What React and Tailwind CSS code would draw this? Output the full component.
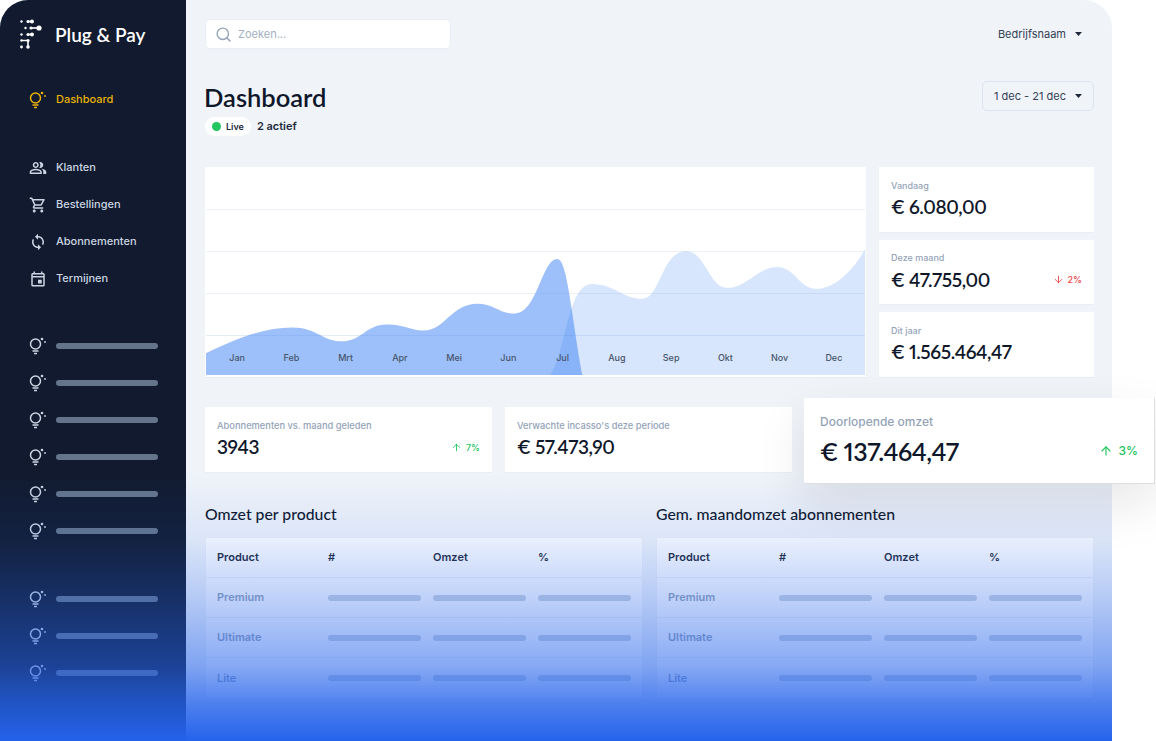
import React from 'react';
import { ArrowUp, ArrowDown, Search } from 'lucide-react';
import { MdOutlinePeopleAlt, MdOutlineShoppingCart, MdSync, MdOutlineEvent } from 'react-icons/md';

const months = ['Jan', 'Feb', 'Mrt', 'Apr', 'Mei', 'Jun', 'Jul', 'Aug', 'Sep', 'Okt', 'Nov', 'Dec'];

const navItems = [
  { name: 'Klanten', icon: MdOutlinePeopleAlt },
  { name: 'Bestellingen', icon: MdOutlineShoppingCart },
  { name: 'Abonnementen', icon: MdSync },
  { name: 'Termijnen', icon: MdOutlineEvent },
];

const Logo = () => (
  <svg width="24" height="32" viewBox="0 0 24 32" fill="white" className="shrink-0">
    <circle cx="1.5" cy="2.5" r="1.2" />
    <circle cx="8" cy="2.5" r="1.6" />
    <circle cx="12" cy="2.5" r="2" />
    <rect x="8" y="1.7" width="5" height="1.6" />
    <circle cx="5.5" cy="9" r="1.2" />
    <circle cx="11" cy="9" r="1.6" />
    <circle cx="19" cy="9" r="2.6" />
    <rect x="11" y="8.2" width="8" height="1.6" />
    <circle cx="1.5" cy="15.5" r="1.2" />
    <circle cx="8" cy="15.5" r="1.6" />
    <circle cx="12" cy="15.5" r="2" />
    <rect x="8" y="14.7" width="4" height="1.6" />
    <circle cx="1.5" cy="21.5" r="1.2" />
    <circle cx="8" cy="21.5" r="1.6" />
    <rect x="1.5" y="20.8" width="6.5" height="1.4" />
    <rect x="7.2" y="21.5" width="1.6" height="6" />
    <circle cx="1.5" cy="28" r="1.4" />
    <circle cx="8" cy="28" r="1.8" />
  </svg>
);

const Bulb = ({ className }) => (
  <svg width="18" height="18" viewBox="0 0 18 18" fill="none" className={className}>
    <circle cx="6.5" cy="7" r="5" stroke="currentColor" strokeWidth="1.5" />
    <path d="M3.5 14h6M5 16.4h3" stroke="currentColor" strokeWidth="1.5" />
    <circle cx="13" cy="2" r="1.3" fill="currentColor" />
    <circle cx="16" cy="5" r="0.9" fill="currentColor" />
  </svg>
);

const Caret = () => (
  <svg width="7" height="4" viewBox="0 0 7 4" className="text-[#1e293b]">
    <path d="M0 0h7L3.5 4z" fill="currentColor" />
  </svg>
);

const NavRow = ({ children }) => (
  <div className="flex h-[37px] items-center pl-[29px]">{children}</div>
);

const PlaceholderGroup = ({ count, className }) => (
  <div className={className}>
    {Array.from({ length: count }).map((_, i) => (
      <NavRow key={i}>
        <Bulb className="mr-[9px] text-[#cbd5e1]" />
        <div className="h-[6px] w-[102px] rounded-full bg-[#64748b]" />
      </NavRow>
    ))}
  </div>
);

const Sidebar = () => (
  <aside className="w-[186px] shrink-0 rounded-tl-[28px] bg-[#111a2e]">
    <div className="mt-[20px] flex h-[30px] items-center pl-[20px]">
      <Logo />
      <span className="ml-[11px] font-['Lato'] text-[19px] font-semibold text-white">Plug &amp; Pay</span>
    </div>
    <div className="mt-[31px]">
      <NavRow>
        <Bulb className="mr-[9px] text-[#eab308]" />
        <span className="text-[11px] font-medium text-[#eab308]">Dashboard</span>
      </NavRow>
    </div>
    <div className="mt-[31px]">
      {navItems.map((item) => {
        const Icon = item.icon;
        return (
          <NavRow key={item.name}>
            <Icon className="mr-[9px] h-[18px] w-[18px] text-[#cbd5e1]" />
            <span className="text-[11px] font-medium text-[#cbd5e1]">{item.name}</span>
          </NavRow>
        );
      })}
    </div>
    <PlaceholderGroup count={6} className="mt-[30px]" />
    <PlaceholderGroup count={3} className="mt-[31px]" />
  </aside>
);

const Stat = ({ label, value, change, down }) => (
  <div className="flex flex-1 flex-col justify-center border border-white bg-white pl-[11px] pr-[11px] shadow-[0_1px_0_#e9eef5]">
    <div className="text-[9px] font-medium text-[#94a3b8]">{label}</div>
    <div className="mt-[2px] flex items-center justify-between">
      <span className="font-['Lato'] text-[19px] font-semibold leading-[26px] tracking-[-0.4px] text-[#0f172a] proportional-nums">{value}</span>
      {change && (
        <span className={`flex items-center gap-[4px] text-[9px] font-medium ${down ? 'text-[#ef4444]' : 'text-[#22c55e]'}`}>
          {down ? <ArrowDown className="h-[11px] w-[11px]" /> : <ArrowUp className="h-[11px] w-[11px]" />}
          {change}
        </span>
      )}
    </div>
  </div>
);

const Chart = () => (
  <div className="relative h-[210px] flex-1 border border-white bg-white shadow-[0_1px_0_#e9eef5]">
    <div className="h-[42px] border-b border-[#eef2f8]" />
    <div className="h-[42px] border-b border-[#eef2f8]" />
    <div className="h-[42px] border-b border-[#eef2f8]" />
    <div className="h-[42px] border-b border-[#e6ecf6]" />
    <svg viewBox="0 0 660 210" preserveAspectRatio="none" className="absolute inset-0 h-full w-full">
      <path
        d="M0 187C32 171 60 161 86 161C112 161 116 175 136 175C156 175 160 158 181 158C200 158 204 164 218 164C240 164 245 137 272 137C288 137 294 147 309 147C332 147 336 92 352 92C362 92 366 150 377 209H0Z"
        fill="#3b82f6"
        fillOpacity="0.5"
      />
      <path
        d="M345 209C362 180 362 117 387 117C408 117 418 132 437 132C455 132 456 84 481 84C500 84 504 121 522 121C542 121 552 100 572 100C590 100 594 122 611 122C632 122 650 100 660 82V209Z"
        fill="#3b82f6"
        fillOpacity="0.2"
      />
    </svg>
    <div className="absolute inset-x-[4px] bottom-[12px] grid grid-cols-12 text-center text-[9px] font-medium text-[#475569]">
      {months.map((m) => (
        <span key={m}>{m}</span>
      ))}
    </div>
  </div>
);

const SmallCard = ({ label, value, change }) => (
  <div className="mt-[9px] flex h-[65px] w-[287px] shrink-0 flex-col justify-center border border-white bg-white px-[11px] shadow-[0_1px_0_#e9eef5]">
    <div className="text-[9.3px] font-medium text-[#94a3b8]">{label}</div>
    <div className="mt-[2px] flex items-center justify-between">
      <span className="font-['Lato'] text-[19px] font-semibold leading-[26px] tracking-[-0.4px] text-[#0f172a] proportional-nums">{value}</span>
      {change && (
        <span className="flex items-center gap-[4px] text-[9px] font-medium text-[#22c55e]">
          <ArrowUp className="h-[11px] w-[11px]" />
          {change}
        </span>
      )}
    </div>
  </div>
);

const DataTable = ({ title }) => (
  <div className="w-[438px]">
    <h2 className="font-['Lato'] text-[15.8px] font-medium leading-[24px] text-[#0f172a]">{title}</h2>
    <div className="mt-[11px] border border-[#eef2f8] bg-white">
      <div className="grid h-[40px] grid-cols-[99px_93px_93px_93px] items-center gap-x-[12px] border-b border-[#eef2f8] px-[11px] text-[11px] font-semibold text-[#1e293b]">
        <span>Product</span>
        <span>#</span>
        <span>Omzet</span>
        <span>%</span>
      </div>
      {['Premium', 'Ultimate', 'Lite'].map((name, i) => (
        <div
          key={name}
          className={`grid h-[40px] grid-cols-[99px_93px_93px_93px] items-center gap-x-[12px] px-[11px] ${i < 2 ? 'border-b border-[#eef2f8]' : ''}`}
        >
          <span className="text-[11px] font-semibold text-[#94a3b8]">{name}</span>
          <div className="h-[6px] rounded-full bg-[#cbd5e1]" />
          <div className="h-[6px] rounded-full bg-[#cbd5e1]" />
          <div className="h-[6px] rounded-full bg-[#cbd5e1]" />
        </div>
      ))}
    </div>
  </div>
);

export default function App() {
  return (
    <div className="h-[741px] w-[1156px] overflow-hidden bg-white font-['Inter',sans-serif]">
      <div className="relative flex h-full w-[1112px] rounded-t-[28px] bg-[#f0f4f9]">
        <Sidebar />
        <main className="flex-1 px-[19px] pt-[19px]">
          <div className="flex h-[30px] items-center justify-between">
            <div className="flex h-[30px] w-[246px] items-center rounded-[5px] border border-[#e9eef5] bg-white px-[10px]">
              <Search className="-ml-[1px] h-[17px] w-[17px] text-[#94a3b8]" />
              <span className="ml-[6px] text-[11px] text-[#a3b0c2]">Zoeken...</span>
            </div>
            <div className="mr-[12px] flex items-center gap-[9px] text-[11px] text-[#334155]">
              Bedrijfsnaam
              <Caret />
            </div>
          </div>

          <div className="mt-[31px] flex items-start justify-between">
            <div>
              <h1 className="-ml-[1px] font-['Lato'] text-[25.5px] font-semibold leading-[34px] text-[#0f172a]">Dashboard</h1>
              <div className="mt-[3px] flex items-center">
                <span className="flex h-[19px] items-center gap-[5px] rounded-full bg-white px-[7px] text-[9px] font-semibold text-[#1e293b]">
                  <span className="h-[9px] w-[9px] rounded-full bg-[#22c55e]" />
                  Live
                </span>
                <span className="ml-[6px] text-[11px] font-semibold text-[#1e293b]">2 actief</span>
              </div>
            </div>
            <div className="mt-[1px] flex h-[30px] w-[112px] items-center justify-between rounded-[5px] border border-[#dde4ee] px-[11px] text-[11px] text-[#334155]">
              1 dec - 21 dec
              <Caret />
            </div>
          </div>

          <div className="mt-[31px] flex h-[210px] gap-[13px]">
            <Chart />
            <div className="flex w-[215px] flex-col gap-[8px]">
              <Stat label="Vandaag" value="€ 6.080,00" />
              <Stat label="Deze maand" value="€ 47.755,00" change="2%" down />
              <Stat label="Dit jaar" value="€ 1.565.464,47" />
            </div>
          </div>

          <div className="mt-[21px] flex h-[86px] items-start gap-[13px]">
            <SmallCard label="Abonnementen vs. maand geleden" value="3943" change="7%" />
            <SmallCard label="Verwachte incasso's deze periode" value="€ 57.473,90" />
            <div className="relative z-20 -mr-[61px] -ml-[1px] flex h-[86px] w-[351px] shrink-0 flex-col justify-center border-r border-b border-[#dcdfe4] bg-white px-[16px] shadow-[0_20px_50px_rgba(15,23,42,0.10)]">
              <div className="text-[12px] font-medium text-[#94a3b8]">Doorlopende omzet</div>
              <div className="mt-[3px] flex items-center justify-between">
                <span className="font-['Lato'] text-[25px] font-semibold leading-[34px] tracking-[-0.5px] text-[#0f172a] proportional-nums">€ 137.464,47</span>
                <span className="flex items-center gap-[6px] text-[12px] font-medium text-[#22c55e]">
                  <ArrowUp className="h-[14px] w-[14px]" />
                  3%
                </span>
              </div>
            </div>
          </div>

          <div className="mt-[18px] flex justify-between">
            <DataTable title="Omzet per product" />
            <DataTable title="Gem. maandomzet abonnementen" />
          </div>
        </main>
        <div className="pointer-events-none absolute inset-x-0 bottom-0 z-10 h-[270px] bg-[linear-gradient(to_bottom,rgba(37,99,235,0)_0%,rgba(37,99,235,0.1)_25%,rgba(37,99,235,0.3)_48%,rgba(37,99,235,0.55)_72%,rgba(37,99,235,0.78)_85%,rgba(37,99,235,1)_100%)]" />
      </div>
    </div>
  );
}
